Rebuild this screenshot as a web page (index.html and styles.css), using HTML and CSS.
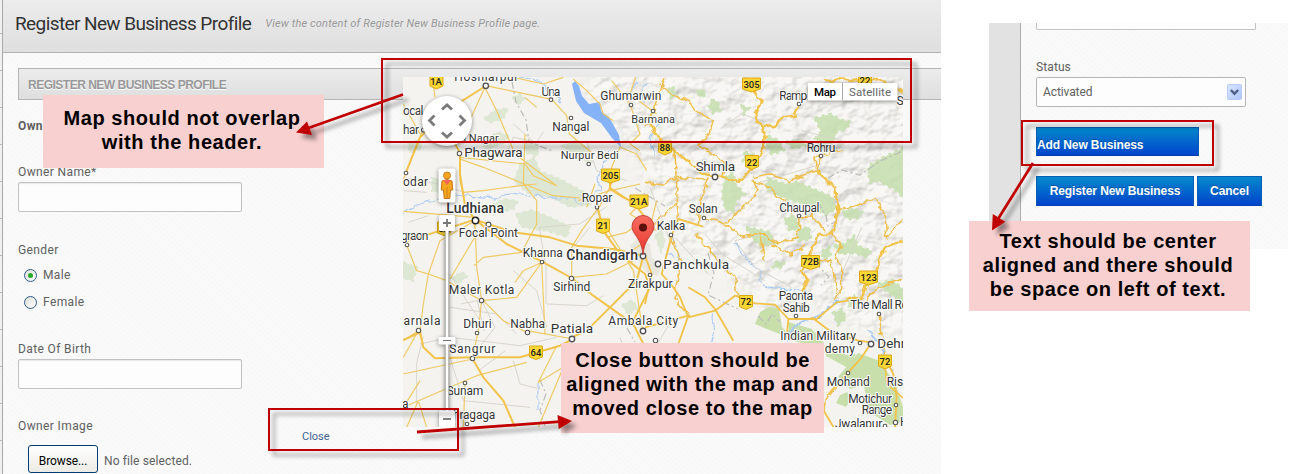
FILE: index.html
```html
<!DOCTYPE html>
<html lang="en">
<head>
<meta charset="utf-8">
<title>Register New Business Profile</title>
<link rel="stylesheet" href="styles.css">
</head>
<body>
<div class="board">
  <section class="screen">
    <aside class="rail"></aside>
    <main class="page">
      <header class="page-head">
        <h1>Register New Business Profile</h1>
        <p>View the content of Register New Business Profile page.</p>
      </header>
      <div class="content">
        <h2 class="bar"><span>REGISTER NEW BUSINESS PROFILE</span></h2>
        <form class="form">
          <strong class="legend">Own</strong>
          <div class="field first"><label class="t-name">Owner Name*</label><div class="input"></div></div>
          <div class="field gender"><label class="t-gender">Gender</label>
            <div class="radio"><i class="dot on"></i><span>Male</span></div>
            <div class="radio"><i class="dot"></i><span>Female</span></div>
          </div>
          <div class="field dob"><label>Date Of Birth</label><div class="input"></div></div>
          <div class="field image"><label>Owner Image</label>
            <div class="file"><span class="browse">Browse...</span><span class="nofile">No file selected.</span></div>
          </div>
        </form>
      </div>
    </main>
    <a class="close">Close</a>
  </section>

  <section class="side">
    <div class="side-rail"></div>
    <div class="side-body">
      <div class="input cut"></div>
      <label class="t-status">Status</label>
      <div class="select"><span>Activated</span>
        <svg width="15" height="16" viewBox="0 0 15 16"><defs><linearGradient id="sel" x2="1" y2="1"><stop stop-color="#dbe6ff"/><stop offset="1" stop-color="#aec4fa"/></linearGradient></defs><rect x=".5" y=".5" width="14" height="15" rx="1" fill="url(#sel)" stroke="#b9cbf8"/><path d="M3.8 6l3.7 3.7L11.2 6" fill="none" stroke="#4d6185" stroke-width="2.4"/></svg>
      </div>
      <div class="btn add"><span>Add New Business</span></div>
      <div class="actions"><div class="btn reg"><span>Register New Business</span></div><div class="btn cancel"><span>Cancel</span></div></div>
    </div>
  </section>

  <svg class="map" width="500" height="350" viewBox="403 77 500 350">
    <defs>
      <filter id="relief" x="0" y="0" width="100%" height="100%" color-interpolation-filters="sRGB">
        <feTurbulence type="fractalNoise" baseFrequency=".05 .065" numOctaves="3" seed="8" result="n"/>
        <feDiffuseLighting in="n" surfaceScale="3.2" diffuseConstant="1.2" lighting-color="#f6f5f2"><feDistantLight azimuth="225" elevation="56"/></feDiffuseLighting>
      </filter>
      <filter id="wiggle" filterUnits="userSpaceOnUse" x="403" y="77" width="500" height="350" color-interpolation-filters="sRGB">
        <feTurbulence type="fractalNoise" baseFrequency=".13" numOctaves="2" seed="2" result="n"/>
        <feDisplacementMap in="SourceGraphic" in2="n" scale="7" xChannelSelector="R" yChannelSelector="G"/>
      </filter>
      <filter id="fade"><feGaussianBlur stdDeviation="9"/></filter>
      <linearGradient id="pin" x2="0" y2="1"><stop stop-color="#fb6e62"/><stop offset="1" stop-color="#e5342b"/></linearGradient>
      <mask id="hills"><path d="M600 50L950 50V330L870 335L810 300L770 318L738 280L700 262L672 225L655 195L640 165L618 130L585 95Z" fill="#fff" filter="url(#fade)"/></mask>
    </defs>
    <rect x="403" y="77" width="500" height="350" fill="#f4f3ef"/>
    <g mask="url(#hills)" opacity=".4"><rect x="403" y="77" width="500" height="350" filter="url(#relief)"/></g>

    <!-- vegetation -->
    <g fill="#dde7d3" stroke="#dde7d3" stroke-width="2" stroke-dasharray="3 4">
      <path d="M480 142l18-10 12 4-8 8-14 6zM484 118l12-8 12-2-4 10-14 5zM512 98l8-4 5 5-7 6zM562 146l12-6 14 8 4 14-16-3zM520 165l14-8 6 14 20 8 26 14 6 12-22 2-18-9-24-5-14-12zM408 143l10-3 4 8-12 5zM432 178l18 1-2 16-16-4zM492 205l12-6 14 2-4 8-20 5zM516 214l16-4 20 8 18 9-3 10-20-6-26-4zM403 262l14 5-4 14-10-3zM450 278l12-6 6 4-10 8zM524 142l14 2 0 12-12-3zM655 236l6-8 4 14-4 10zM622 305l10-5 6 8-10 7z"/>
    </g>
    <g fill="#c6dfae" stroke="#c6dfae" stroke-width="3" stroke-dasharray="3 4" opacity=".85">
      <path d="M668 90l5-4 3 10-5 2zM712 100l6 2 2 8-7 3-4-7zM697 92l5-3 4 6-5 2zM742 106l7 2-5 6zM815 118l16-4 10 6 10 2-6 8-8 1-4 12-10 4-8-8 6-7zM768 136l10 4 6 10-12 4-6-8zM786 142l14-2 6 5-12 4zM745 152l10 3-2 8-10-2zM725 178l8-6 2 12 10 10-8 6-4 12-8-3-3-14zM768 178l16 6 14-2 20 9 14 6 4 12-10 6-14-8-18-6-16-5-12-8zM870 165l18-10 16-7v50l-10-9-16-8-8 2-2-12zM746 227l10 2 14 3 4 12-12 2-8-5zM784 219l10-4 6 12-10 4zM797 230l12-3 2 12-12 2zM842 212l10-4 10 4-4 6-10 1zM834 245l10-1 10-8 4 10 14 5-6 6-12-4-14 1zM822 251l7-4 2 9-8 3zM776 262l8 1-2 5-9-1zM878 284l14-4 12 10v12l-14-8zM848 300l6-4 3 7-8 3zM833 313l9-4 4 9-8 7z"/>
    </g>
    <path fill="#c8dfac" d="M755 324l5-12 9-5 10 2 3 18 12 14-6-4-16-6zM788 322l24 7 12 14v6l-6-2-28-7zM824 345l22 10 10-1-8 14-22-12zM858 353l22 8 16 24 7 22v14l-13 4-22-14-4-26-14 4-12-12zM840 395l7-3 5 6-6 9-10-4z"/>
    <path fill="#e4dfd6" opacity=".7" d="M630 246l8-8 12 6 2 14 10 6-4 12-12-4-8-12zM636 150l6 3-2 6-6-2z"/>

    <!-- water -->
    <path d="M572 84l3-3 4 5 3 10 7 8 11-2 1 9 8 6 10 18 2 12-9-9-11-15-17-10-8-12z" fill="#86b2f7"/>
    <g fill="none" stroke="#a9caf7" stroke-width="1.1" filter="url(#wiggle)">
      <path d="M403 214C420 200 440 200 452 196S486 203 502 196S540 200 560 198S575 205 582 204S592 192 600 190L598 178 610 150M736 242c10 24 20 18 25 36s30 8 45 13M520 78l22 4 6 10M648 82l-8 10 4 14M660 120l-10 20 6 16M715 310c-8 10 4 20-5 32M664 253l14 3M550 90l12 12M638 82l-10 16M538 382v28" />
      <path d="M788 342c3-24 20-18 32-27l14-12 7-3M868 330l12 16 12 26" stroke-width="2"/>
    </g>
    <path d="M512 82l4 20 10 18 3 22 24 9M635 188l30 18M672 236l8 22-8 10M708 253l6 20-6 22 30 14M828 178l14-8 18 5 20-14 23-10M818 202l8 14 2 10 10-6M815 263l14 14-8 8M540 380l6 14-6 16 5 16M627 328l8 14M758 316l8 8 6-10 8 8" fill="none" stroke="#bcbcba" stroke-width="1.2" stroke-dasharray="7 3 2 3"/>

    <!-- minor roads -->
    <g transform="translate(400 74) scale(.333333)" fill="none" stroke="#d6d3ca" stroke-width="2.8">
      <path d="M8 310l106 20 70 22M25 445l60-20M10 350l70 5M230 215l-30 35M315 250l25-60 70 14 20-30M340 150l80 70M150 600l50 80 40 60M182 690l50-10 20 90M340 590l70 60 30 110M440 690l120 5 50-30M70 788l-20 80v130M60 810l90-20 210 25 110-25M340 860l20 70 60 15M236 890l80-60M150 850l40 130 200 20M245 680l40 80-70 90M350 780l-60-60-140-20M520 520l50-60M438 690v-110l-20-120 120-10 80-50M660 790l40 120M560 200l30 90 90 30"/>
    </g>
    <g transform="translate(645 74) scale(.333333)" fill="none" stroke="#d6d3ca" stroke-width="2.8">
      <path d="M15 340l60 160M90 490l100 110M25 830l60-100M230 160l60-40 60 20M470 170l120 30M330 330l200-60M350 480l-80 20 60 80 110 60M590 600l60-140M180 480l50 60 130 80"/>
    </g>

    <!-- roads, western plains -->
    <g transform="translate(400 74) scale(.333333)" fill="none" stroke="#efc964" stroke-width="3.5" stroke-linejoin="round">
      <path d="M105 70L100 30M68 168L16 300L0 340M60 180L10 90M180 245V320L195 390L225 440M180 255L250 280L460 365L540 372M257 45L290 110L345 240L470 335L400 305L375 270L180 250M257 35L200 160M257 35L340 52L455 76L500 125L508 180L580 240M375 70L410 100M340 10L430 30L490 10M375 180L370 330L410 380V450L365 535L250 550L222 575M10 412L225 430M410 330L360 335L250 350L190 355M20 513L50 590L85 600L140 620L245 680L235 770L218 850M85 600L120 500L225 440M85 600L70 690L60 770M225 440L230 580L245 680M245 680L350 670L425 565M345 625L370 590L420 568M425 565L435 780M245 675L310 740L380 775M380 770L520 795M10 800L55 770L10 850M150 615L230 480L220 445M218 855L10 900M60 920L10 1000L230 905L380 865M515 610L620 600L700 560M515 610V520L545 470L600 395M590 400L600 430L700 590L728 770M620 490L680 475L728 440M600 395L650 300M195 930L190 1060M20 1060L55 980L80 1060M415 1060L490 880L415 925L470 815M635 20L690 90L720 180L690 210L720 230M690 380L630 340L635 280L660 220L710 240L740 290"/>
      <path d="M270 15L230 5M520 15L560 50L600 90L610 120L640 140M535 380L630 350L720 330M585 330L560 400M720 390L690 420L770 470M695 530L740 500L770 380M770 120L690 60L710 0"/>
    </g>
    <g transform="translate(400 74) scale(.333333)" fill="none" stroke="#f2c34b" stroke-width="6" stroke-linejoin="round">
      <path d="M257 36L140 110L60 190L20 290M180 240V300L195 395L225 437M225 437L10 505M225 437L340 475L450 490L530 515L640 525L730 545M225 437L320 510L425 562L515 612L580 665L700 750L740 830M515 790L560 770L630 700L710 620L730 545M593 400L610 470L660 540L735 600L750 640L700 740M60 770L70 820L105 853L218 850L360 850L480 815L520 795M218 855L250 910L310 980L345 1060M10 798L60 775L70 820M160 200L182 240M630 300L630 345L670 370L700 385L735 430"/>
    </g>

    <!-- roads, eastern hills -->
    <g filter="url(#wiggle)">
      <g transform="translate(645 74) scale(.333333)" fill="none" stroke="#efbf4d" stroke-width="4.6">
        <path d="M60 10L45 45L20 120L0 160M45 35L80 60L130 80L150 110L205 140L185 190L160 215L240 265L230 310M90 230L95 340L100 440M0 325L40 335L95 310L190 320M0 480L60 420L100 380M160 450L165 380L190 310M175 430L240 450L340 355L325 320L350 330L420 380L440 420M240 450L290 490L345 480L355 560M345 480L400 510L460 490L462 430L500 425L540 470M380 510L440 540L480 515M155 480L210 550L270 610L275 670M325 310L370 300L430 320L515 290L530 250M515 290L510 250L590 225M580 410L670 380L690 370L720 420L725 490L770 440M560 480L590 510L570 540L590 590L590 640L570 680M520 560L560 560L575 660M75 490L110 560L90 650L100 690L135 730M700 720L705 760L720 840M610 890L550 970L520 1060M660 680L690 650L770 615"/>
      </g>
      <g transform="translate(645 74) scale(.333333)" fill="none" stroke="#f2c34b" stroke-width="7.500" stroke-linejoin="round">
        <path d="M320 40L350 80L330 120L350 160L362 190L350 240L320 270L320 290L280 320L235 310L210 305L180 300L140 270L100 240L50 200L0 130M350 160L390 155L415 130L450 125L460 95M540 25L580 15L620 20L700 15L770 55M515 290L570 340L580 410L560 480L520 480L500 530L490 560L470 590L490 620L470 650M770 500L720 520L705 560L690 600L660 640L650 675L605 675"/>
      </g>
    </g>
    <g transform="translate(645 74) scale(.333333)" fill="none" stroke="#f2c34b" stroke-width="5.5" stroke-linejoin="round">
      <path d="M175 458L100 435L80 485L50 600L85 640L105 670L130 730L210 710L270 665L330 688L390 692L430 735L515 735L575 685L610 680M0 545L20 600L0 690M430 735L425 790M500 730L560 775L640 800L680 805L650 850L610 895L550 960M0 760L130 725L100 810M130 640L180 670L210 705L265 800M530 1000L560 1050L570 1065M720 850L745 900L755 970L750 1065"/>
    </g>
    <path d="M885 366l2 18 16 14M812 420l10-14" fill="none" stroke="#f2c34b" stroke-width="1.6"/>

    <!-- town dots -->
    <g fill="#fff" stroke="#555" stroke-width="1.1">
      <g stroke-width="1.4"><circle cx="485.8" cy="85.8" r="2.7"/><circle cx="475.5" cy="220.5" r="3.2" stroke="#222"/><circle cx="572" cy="339" r="2.7"/><circle cx="643" cy="331" r="2.7"/><circle cx="715" cy="177" r="2.7"/><circle cx="658" cy="264" r="2.7"/><circle cx="643" cy="256" r="2.7"/><circle cx="871" cy="344" r="2.7"/></g>
      <circle cx="551" cy="99.7" r="1.8"/><circle cx="571" cy="118" r="1.8"/><circle cx="631" cy="105" r="1.8"/><circle cx="653" cy="111" r="1.8"/><circle cx="459.5" cy="153.5" r="2.2"/><circle cx="588.7" cy="164" r="1.8"/><circle cx="597" cy="207.3" r="1.8"/><circle cx="406" cy="173" r="1.8"/><circle cx="407" cy="245" r="1.8"/><circle cx="488.5" cy="224.5" r="2.4"/><circle cx="542" cy="262" r="1.8"/><circle cx="571.5" cy="278.5" r="2.2"/><circle cx="650" cy="275" r="1.8"/><circle cx="481.5" cy="300.5" r="2.2"/><circle cx="418.5" cy="330.5" r="2.2"/><circle cx="477" cy="333" r="1.8"/><circle cx="527.5" cy="332.5" r="2.2"/><circle cx="472.5" cy="358.5" r="2.2"/><circle cx="465" cy="383" r="1.8"/><circle cx="467" cy="424" r="1.8"/><circle cx="655.5" cy="340.5" r="2.2"/><circle cx="423.5" cy="130" r="2"/><circle cx="799" cy="104" r="1.8"/><circle cx="821" cy="156" r="1.8"/><circle cx="704" cy="218" r="1.8"/><circle cx="799" cy="216" r="1.8"/><circle cx="671" cy="235" r="1.8"/><circle cx="796" cy="316" r="1.8"/><circle cx="879" cy="314" r="1.8"/><circle cx="860" cy="343" r="1.8"/><circle cx="848" cy="373" r="1.8"/><circle cx="896" cy="405" r="1.8"/><circle cx="895.5" cy="422.5" r="2.2"/><circle cx="885" cy="426" r="1.8"/>
    </g>

    <!-- route shields -->
    <g class="shield">
      <path d="M430 74h13v12l-6.500 3-6.500-3z"/>
      <path d="M601.500 169h18v11l-9 3-9-3z"/><path d="M630 195h18v11l-9 3-9-3z"/><path d="M596.500 219h13v12l-6.500 2.500-6.500-2.500z"/><path d="M437.500 222h13v11l-6.500 2.500-6.500-2.500z"/><path d="M529.500 346h13v11l-6.500 2.500-6.500-2.500z"/>
      <path d="M742.500 78h18v11l-9 3-9-3z"/><path d="M858.500 74h13v10l-6.500 3-6.500-3z"/><path d="M658.500 141h13v11l-6.500 3-6.500-3z"/><path d="M745.500 155.500h13v11l-6.500 3-6.500-3z"/><path d="M801.500 255.500h18v11l-9 3-9-3z"/><path d="M859.500 271h18v11l-9 3-9-3z"/><path d="M739.500 295.500h13v11l-6.500 3-6.500-3z"/><path d="M878.500 355h13v11l-6.500 3-6.500-3z"/>
    </g>
    <g class="num">
      <text x="436" y="85">1A</text><text x="610.500" y="179">205</text><text x="638.700" y="205">21A</text><text x="603" y="229">21</text><text x="444" y="232">5A</text><text x="536" y="355.500">64</text><text x="751.500" y="88">305</text><text x="865" y="84">22</text><text x="665" y="151">88</text><text x="752" y="165.500">22</text><text x="810.500" y="265">72B</text><text x="868.700" y="280.500">123</text><text x="746" y="305">72</text><text x="885" y="364.500">72</text>
    </g>

    <!-- place names -->
    <g class="town">
      <text x="454.300" y="80.700" textLength="64">Hoshiarpur</text><text x="541.600" y="96" textLength="18.700">Una</text><text x="600.300" y="100.300" textLength="61">Ghumarwin</text><text x="552.300" y="131.300" textLength="37">Nangal</text><text class="s" x="631.300" y="122.700" textLength="43.700">Barmana</text><text x="403" y="115.300" textLength="20.500">ocal</text><text x="403" y="134" textLength="16">har</text><text class="s" x="460" y="142.300" textLength="38.700">n Nagar</text><text class="m" x="464.300" y="156.700" textLength="58.400">Phagwara</text><text class="s" x="560.700" y="159.300" textLength="58">Nurpur Bedi</text><text x="581.700" y="202.300" textLength="30.600">Ropar</text><text x="403" y="186" textLength="25">odar</text><text x="401" y="239.700" textLength="27.500">graon</text><text x="458.700" y="237" textLength="59.300">Focal Point</text><text x="522.700" y="257" textLength="40">Khanna</text><text x="553.300" y="290.700" textLength="37">Sirhind</text><text x="628" y="288.300" textLength="44.700">Zirakpur</text><text x="448.700" y="294" textLength="65.600">Maler Kotla</text><text x="463.300" y="328.300" textLength="28.400">Dhuri</text><text x="510.300" y="328.300" textLength="34.700">Nabha</text><text class="m" x="550.700" y="332.700" textLength="42.300">Patiala</text><text x="608.300" y="325" textLength="70">Ambala City</text><text x="403.500" y="324.700" textLength="37">arnala</text><text x="449.300" y="353.300" textLength="46">Sangrur</text><text x="446.700" y="395.300" textLength="36.500">Sunam</text><text x="453" y="419.300" textLength="42.300">hragaga</text><text x="402" y="408" textLength="6">a</text><text class="l" x="446.300" y="213" textLength="57.700">Ludhiana</text><text class="l" x="566.300" y="260" textLength="71.700">Chandigarh</text>
      <text x="779.300" y="100" textLength="28">Ramp</text><text x="896.500" y="104.700">S</text><text x="806.700" y="151.700" textLength="28.600">Rohru</text><text class="m" x="695.700" y="171" textLength="39.300">Shimla</text><text x="688.700" y="213.300" textLength="29">Solan</text><text x="779.300" y="211.700" textLength="40">Chaupal</text><text x="656.700" y="230.300" textLength="28.600">Kalka</text><text class="m" x="663.300" y="268.700" textLength="65.700">Panchkula</text><text x="778.700" y="299.700" textLength="34.300">Paonta</text><text x="782.700" y="311.700" textLength="27">Sahib</text><text x="850.300" y="309.300" textLength="58">The Mall Ro</text><text x="780.300" y="339.700" textLength="75.700">Indian Military</text><text x="818" y="353.300" textLength="37">ademy</text><text class="m" x="877.300" y="347.700" textLength="28">Dehr</text><text x="826.700" y="385.700" textLength="43">Mohand</text><text x="886.700" y="385.700" textLength="16.500">Ris</text><text x="848.300" y="402.700" textLength="43.700">Motichur</text><text x="861.700" y="414.300" textLength="30.300">Range</text><text x="835" y="427.700" textLength="47.300">Jwalapur</text><text x="900" y="426">H</text>
    </g>

    <!-- marker -->
    <path d="M643 255c-.8-9-3-13-6.500-18.500C633.800 232.700 632 230 632 226.500a11 11 0 0 1 22 0c0 3.500-1.800 6.200-4.500 10C646 242 643.800 246 643 255z" fill="url(#pin)" stroke="#c13b32" stroke-width=".9"/><circle cx="643" cy="227.500" r="4" fill="#5c100c"/>

    <!-- map controls -->
    <g class="ctl">
      <circle cx="447" cy="121" r="25" fill="#fff"/>
      <path d="M442 109.500l5-4.500 5 4.500M442 132.500l5 4.500 5-4.500M434.500 115.500l-5 5 5 5M459.500 115.500l5 5-5 5" fill="none" stroke="#7b7b7b" stroke-width="2.800"/>
      <rect x="438.500" y="168.500" width="17" height="34" rx="2" fill="#fff"/>
      <rect x="445.200" y="223" width="3.600" height="190" fill="#fff" stroke="#999" stroke-width=".8"/>
      <rect x="439" y="215" width="16" height="16" rx="1.500" fill="#fff"/><path d="M443 223h8M447 219v8" stroke="#777" stroke-width="1.800"/>
      <rect x="438.500" y="337" width="17" height="7.500" rx="1" fill="#fff"/><path d="M443 340.500h8" stroke="#777"/>
      <rect x="439" y="410.500" width="16" height="17" rx="1.500" fill="#fff"/><path d="M443 419h8" stroke="#777" stroke-width="1.800"/>
    </g>
    <path d="M442 181q5-3 10 0l.8 9h-2.300l-.7 8.500h-5.600l-.7-8.500h-2.300z" fill="#f6a71f" stroke="#bb6c10" stroke-width=".9"/><path d="M447 187v11" stroke="#c47913" stroke-width=".8"/><path d="M443 180h8l-4 5z" fill="#f1665a"/><circle cx="447" cy="175.500" r="3.500" fill="#f6a71f" stroke="#bb6c10" stroke-width=".8"/>
    <g class="ctl"><rect x="808" y="83" width="89.500" height="17.500" rx="1" fill="#fff"/></g>
    <path d="M842.500 83v17.500" stroke="#aaa"/>
    <text class="tab on" x="814" y="96" textLength="22">Map</text><text class="tab" x="849" y="96" textLength="42">Satellite</text>
  </svg>

  <div class="mark m1"></div><div class="mark m2"></div><div class="mark m3"></div>
  <div class="note n1"><span>Map should not overlap</span><span>with the header.</span></div>
  <div class="note n2"><span>Close button should be</span><span>aligned with the map and</span><span>moved close to the map</span></div>
  <div class="note n3"><span>Text should be center</span><span>aligned and there should</span><span>be space on left of text.</span></div>
  <svg class="arrows" width="1290" height="474" viewBox="0 0 1290 474">
    <g fill="#c00000" stroke="#c00000">
      <path d="M403 94.500L307 128.500M417 432l143-10.300M1033 163L998 219" stroke-width="2.800"/>
      <path d="M296 132.500l11-11 5 13.500zM572 421l-14.500-6 1.200 14zM992 230.500l.8-16.500 12.500 7.700z" stroke="none"/>
    </g>
  </svg>
</div>
</body>
</html>
```
FILE: styles.css
```css
* { box-sizing: border-box; }
body { margin: 0; background: #fff; color: #606060; font: 12px/16px Roboto, "Liberation Sans", sans-serif; }
h1, h2, p { margin: 0; font-weight: normal; }
.board { position: relative; display: flex; width: 1290px; height: 474px; overflow: hidden; }

.screen { position: relative; display: flex; width: 941px; height: 474px; }
.rail { width: 3px; border-right: 1px solid #a9a9a9; background: linear-gradient(#bbb 0 1px, #f0f0f0 1px) 0 33px / 3px 37px repeat-y #eee; }
.page { flex: 1; display: flex; flex-direction: column; }
.page-head { display: flex; flex-shrink: 0; align-items: center; gap: 14px; height: 53px; padding: 0 0 5px 12px; background: linear-gradient(#ececec, #dfdfdf); border-bottom: 1px solid #b3b3b3; }
.page-head h1 { font-size: 19px; line-height: 24px; color: #333; letter-spacing: -.6px; white-space: nowrap; }
.page-head p { font-size: 11px; font-style: italic; color: #999; letter-spacing: .16px; padding-top: 1px; white-space: nowrap; }
.content { flex: 1; padding: 15px 0 0 15px; background: repeating-linear-gradient(45deg, #fafafa 0 2px, #f8f8f8 2px 4px); }
.bar { display: flex; align-items: center; height: 32px; padding-left: 9px; border: 1px solid #b5b5b5; border-right: 0; background: linear-gradient(#ececec, #dedede); color: #999; font: bold 12px/16px "Liberation Sans", Arial, sans-serif; text-shadow: 0 1px #fff; }
.bar span { padding-top: 1px; letter-spacing: -.5px; }
.form { display: flex; flex-direction: column; width: 224px; padding-top: 18px; letter-spacing: .38px; }
.legend { height: 16px; }
.field { display: flex; flex-direction: column; }
.field label { height: 16px; }
.first { margin-top: 30px; }
.gender { margin-top: 30px; }
.dob { margin-top: 31px; }
.image { margin-top: 29px; }
.input { height: 30px; margin-top: 2px; border: 1px solid #c2c2c2; border-radius: 2px; background: #fdfdfd; box-shadow: inset 0 1px 1px #e9e9e9; }
.radio { display: flex; align-items: center; gap: 6px; height: 16px; margin: 9px 0 0 6px; }
.radio + .radio { margin-top: 11px; }
.dot { display: grid; place-items: center; width: 13px; height: 13px; border: 1px solid #2d5c8c; border-radius: 50%; background: linear-gradient(135deg, #dcdcd6, #fff); }
.on::after { content: ""; width: 5px; height: 5px; border-radius: 50%; background: #27aa27; }
.file { display: flex; align-items: center; gap: 6px; margin: 11px 0 0 10px; white-space: nowrap; letter-spacing: .12px; }
.browse { display: flex; align-items: center; justify-content: center; width: 70px; height: 28px; padding-top: 3px; border: 1px solid #003c74; border-radius: 3px; background: linear-gradient(#fff, #ecebe5); color: #000; letter-spacing: -.1px; }
.nofile { padding-top: 3px; }
.close { position: absolute; left: 302px; top: 429px; font-size: 11px; color: #45628f; }

.side { display: flex; width: 299px; height: 226px; margin: 23px 0 0 48px; }
.side-rail { width: 32px; border-right: 1px solid #adadad; background: #e2e2e2; }
.side-body { flex: 1; padding-left: 15px; background: repeating-linear-gradient(45deg, #fafafa 0 2px, #f8f8f8 2px 4px); }
.side-body label { display: block; margin-top: 29px; height: 16px; letter-spacing: .1px; }
.cut { width: 220px; height: 7px; margin: 0; border-top: 0; border-radius: 0 0 2px 2px; box-shadow: none; }
.select { display: flex; align-items: center; justify-content: space-between; width: 210px; height: 30px; margin-top: 2px; padding: 0 3px 0 6px; border: 1px solid #b5b5b5; border-radius: 2px; background: #fdfdfd; letter-spacing: -.1px; }
.btn { display: flex; align-items: center; height: 30px; background: linear-gradient(#0488cc, #0044cc); border: 1px solid #0a5fb4; border-bottom-color: #0040b0; color: #fff; font: bold 12px/16px "Liberation Sans", Arial, sans-serif; letter-spacing: -.1px; white-space: nowrap; text-shadow: 0 -1px rgba(0, 0, 0, .25); }
.add { width: 163px; height: 29px; margin-top: 20px; padding-top: 6px; }
.actions { display: flex; gap: 3px; margin-top: 20px; }
.reg { width: 158px; justify-content: center; }
.cancel { width: 65px; justify-content: center; }

.map { position: absolute; left: 403px; top: 77px; }
.shield path { fill: #fdd835; stroke: #dba818; stroke-width: 1; }
.num { font: 500 9.5px Roboto, sans-serif; fill: #222; text-anchor: middle; }
.town { font: 12px Roboto, sans-serif; fill: #333; paint-order: stroke; stroke: #fff; stroke-width: 2px; stroke-linejoin: round; }
.town .s { font-size: 11px; }
.town .m { font-size: 13.5px; }
.town .l { font-size: 14px; font-weight: 500; }
.ctl { filter: drop-shadow(0 1px 2px rgba(0, 0, 0, .45)); }
.tab { font: 11.5px Roboto, sans-serif; fill: #666; }
.tab.on { font-weight: 500; fill: #000; }

.mark { position: absolute; border: 2px solid #c00000; filter: drop-shadow(5px 5px 2px rgba(0, 0, 0, .4)); }
.m1 { left: 381px; top: 58px; width: 531px; height: 85px; }
.m2 { left: 268px; top: 408px; width: 191px; height: 43px; }
.m3 { left: 1021px; top: 120px; width: 193px; height: 46px; }
.note { position: absolute; display: flex; flex-direction: column; align-items: center; background: #f8d0d0; color: #000; font: bold 20px/24px "Liberation Sans", Arial, sans-serif; letter-spacing: .57px; white-space: nowrap; }
.n1 { left: 43px; top: 95px; width: 281px; height: 73px; padding-top: 11px; padding-right: 3px; }
.n2 { left: 561px; top: 343px; width: 263px; height: 90px; padding-top: 5px; }
.n3 { left: 969px; top: 221px; width: 281px; height: 90px; padding-top: 8px; padding-right: 3px; }
.arrows { position: absolute; left: 0; top: 0; filter: drop-shadow(5px 5px 2px rgba(0, 0, 0, .4)); }
```
